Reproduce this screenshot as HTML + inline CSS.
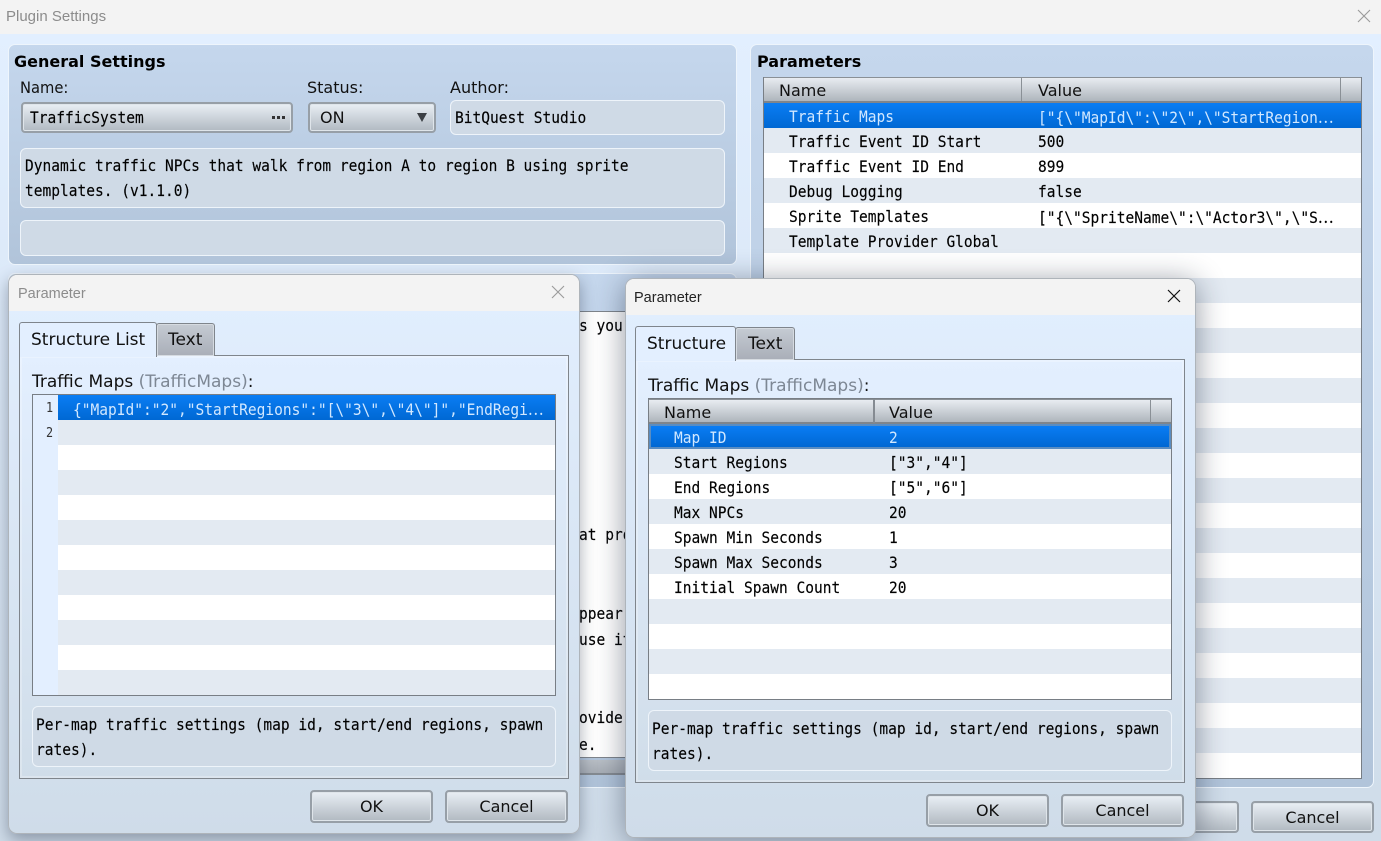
<!DOCTYPE html>
<html><head><meta charset="utf-8"><style>
html,body{margin:0;padding:0;width:1381px;height:841px;overflow:hidden;background:#d3e0ec}
*{box-sizing:border-box}
div,span{position:absolute}
.t{white-space:pre;color:#111;font-family:"DejaVu Sans",sans-serif;font-size:16px;line-height:20px}
.l{font-size:17px}
.m{white-space:pre;color:#000;font-family:"DejaVu Sans Mono",monospace;font-size:16px;line-height:25px;transform:scaleX(.908);transform-origin:0 50%;-webkit-text-stroke:.15px #000}
.e{position:static;font-family:"Noto Sans CJK JP",monospace}
.b{font-weight:bold;color:#000}
.s{color:#d2e8ff;-webkit-text-stroke:0}
.panel{border:1px solid #eef5fc;border-radius:7px;background:linear-gradient(#c5d7ed,#b1c4da)}
.box{border:1px solid #eef4fa;border-radius:6px;background:#cfdae6}
.btn{border:2px solid #979fa7;border-radius:4px;background:linear-gradient(#e9eff5,#b1b9c1);box-shadow:inset 0 0 0 1px #dfe5ea}
.btn span{left:0;right:0;text-align:center;top:5px;white-space:pre;font-family:"DejaVu Sans",sans-serif;font-size:16px;line-height:20px;color:#111}
.grid{border:1px solid #787e85;background:repeating-linear-gradient(#fff 0,#fff 25px,#e3eaf2 25px,#e3eaf2 50px)}
.alt{background:repeating-linear-gradient(#e3eaf2 0,#e3eaf2 25px,#fff 25px,#fff 50px)}
.head{background:linear-gradient(#e8ecf1,#aeb5bc);border-bottom:2px solid #7f858c;border-top:1px solid #8a9096}
.sel{background:linear-gradient(#0a7df4,#0068d3)}
.dlg{border:1px solid #aeb4ba;border-radius:9px;background:linear-gradient(#e2efff,#cfdce9);overflow:hidden}
.tb{left:0;right:0;top:0;height:36px;background:#f3f3f3}
.pane{border:1px solid #7f858c;background:linear-gradient(#e3efff,#d0dde9);box-shadow:inset 0 0 0 2px rgba(255,255,255,.25)}
.tab2{border:1px solid #7f858c;border-bottom:0;border-radius:3px 3px 0 0;background:linear-gradient(#c5cbd3,#a9aeb8);box-shadow:inset 0 0 0 1px #d6dbe1}
.tab1{border:1px solid #7f858c;border-bottom:0;border-radius:3px 3px 0 0;background:#e3efff}
.g{color:#7d8794;position:static}
</style></head><body>
<div style="left:0;top:0;width:1381px;height:34px;background:#f3f3f3"></div>
<div style="left:0;top:34px;width:1381px;height:807px;background:linear-gradient(#e2efff,#cfdce9)"></div>
<div class="t" style="left:6px;top:7px;font-family:'Liberation Sans',sans-serif;font-size:15px;color:#8c8c8c">Plugin Settings</div>
<svg style="position:absolute;left:1357px;top:9px" width="14" height="14"><path d="M1 1L13 13M13 1L1 13" stroke="#9a9a9a" stroke-width="1.1" fill="none"/></svg>

<div class="panel" style="left:8px;top:44px;width:729px;height:221px"></div>
<div class="t b" style="left:14px;top:52px">General Settings</div>
<div class="t" style="left:20px;top:78px;transform:scaleX(.92);transform-origin:0 50%">Name:</div>
<div class="t" style="left:307px;top:78px">Status:</div>
<div class="t" style="left:450px;top:78px">Author:</div>
<div class="btn" style="left:21px;top:102px;width:272px;height:31px"></div>
<div class="m" style="left:30px;top:105px">TrafficSystem</div>
<div style="left:272px;top:116px;width:3px;height:3px;background:#333;box-shadow:5px 0 #333,10px 0 #333"></div>
<div class="btn" style="left:308px;top:102px;width:128px;height:31px"></div>
<div class="t" style="left:320px;top:108px">ON</div>
<svg style="position:absolute;left:417px;top:113px" width="11" height="10"><path d="M0 0H10L5 9Z" fill="#3b3f44"/></svg>
<div class="box" style="left:450px;top:100px;width:275px;height:35px"></div>
<div class="m" style="left:455px;top:105px">BitQuest Studio</div>
<div class="box" style="left:20px;top:148px;width:705px;height:60px"></div>
<div class="m" style="left:25px;top:153px">Dynamic traffic NPCs that walk from region A to region B using sprite</div>
<div class="m" style="left:25px;top:178px">templates. (v1.1.0)</div>
<div class="box" style="left:20px;top:220px;width:705px;height:36px"></div>

<div class="panel" style="left:8px;top:273px;width:729px;height:515px"></div>
<div style="left:20px;top:311px;width:705px;height:447px;background:#fff;border-top:1px solid #7f858c;border-bottom:1px solid #7f858c"></div>
<div style="left:20px;top:760px;width:705px;height:15px;background:linear-gradient(#b9bfc6,#a7adb5);border-bottom:2px solid #858b92"></div>
<div class="m" style="left:579px;top:313px">s you</div>
<div class="m" style="left:579px;top:522px">at pro</div>
<div class="m" style="left:579px;top:601px">ppear</div>
<div class="m" style="left:579px;top:627px">use it</div>
<div class="m" style="left:579px;top:705px">ovider</div>
<div class="m" style="left:579px;top:732px">e.</div>

<div class="panel" style="left:750px;top:44px;width:624px;height:744px"></div>
<div class="t b" style="left:757px;top:52px">Parameters</div>
<div class="grid alt" style="left:763px;top:77px;width:599px;height:702px"></div>
<div class="head" style="left:764px;top:77px;width:597px;height:26px"></div>
<div style="left:1021px;top:78px;width:1px;height:23px;background:#8a9096"></div>
<div style="left:1340px;top:78px;width:1px;height:23px;background:#8a9096"></div>
<div class="t" style="left:779px;top:81px">Name</div>
<div class="t" style="left:1038px;top:81px">Value</div>
<div class="sel" style="left:764px;top:103px;width:597px;height:25px"></div>
<div class="m s" style="left:789px;top:104px">Traffic Maps</div>
<div class="m s" style="left:1038px;top:104px">["{\"MapId\":\"2\",\"StartRegion<span class="e">⋯</span></div>
<div class="m" style="left:789px;top:129px">Traffic Event ID Start</div><div class="m" style="left:1038px;top:129px">500</div>
<div class="m" style="left:789px;top:154px">Traffic Event ID End</div><div class="m" style="left:1038px;top:154px">899</div>
<div class="m" style="left:789px;top:179px">Debug Logging</div><div class="m" style="left:1038px;top:179px">false</div>
<div class="m" style="left:789px;top:204px">Sprite Templates</div><div class="m" style="left:1038px;top:204px">["{\"SpriteName\":\"Actor3\",\"S<span class="e">⋯</span></div>
<div class="m" style="left:789px;top:229px">Template Provider Global</div>

<div class="btn" style="left:1116px;top:801px;width:123px;height:32px"></div>
<div class="btn" style="left:1251px;top:801px;width:123px;height:32px"><span>Cancel</span></div>

<!-- left dialog -->
<div class="dlg" style="left:8px;top:274px;width:572px;height:560px;box-shadow:0 6px 16px rgba(30,40,60,.38)">
  <div class="tb"></div>
</div>
<div class="t" style="left:18px;top:284px;font-family:'Liberation Sans',sans-serif;font-size:14.5px;color:#8c8c8c">Parameter</div>
<svg style="position:absolute;left:551px;top:285px" width="14" height="14"><path d="M1 1L13 13M13 1L1 13" stroke="#9a9a9a" stroke-width="1.1" fill="none"/></svg>
<div class="pane" style="left:19px;top:355px;width:550px;height:424px"></div>
<div class="tab2" style="left:156px;top:323px;width:59px;height:33px"></div>
<div class="tab1" style="left:19px;top:322px;width:138px;height:35px"></div>
<div class="t l" style="left:31px;top:330px">Structure List</div>
<div class="t l" style="left:168px;top:330px">Text</div>
<div class="t l" style="left:32px;top:372px">Traffic Maps <span class="g">(TrafficMaps)</span>:</div>
<div class="grid" style="left:32px;top:394px;width:524px;height:302px"></div>
<div style="left:33px;top:395px;width:25px;height:300px;background:#e3efff"></div>
<div class="sel" style="left:58px;top:395px;width:497px;height:25px"></div>
<div class="m" style="left:46px;top:396px;font-size:13px;color:#333;-webkit-text-stroke:0">1</div>
<div class="m" style="left:46px;top:421px;font-size:13px;color:#333;-webkit-text-stroke:0">2</div>
<div class="m s" style="left:73px;top:396px">{"MapId":"2","StartRegions":"[\"3\",\"4\"]","EndRegi<span class="e">⋯</span></div>
<div class="box" style="left:32px;top:706px;width:524px;height:61px"></div>
<div class="m" style="left:36px;top:712px">Per-map traffic settings (map id, start/end regions, spawn</div>
<div class="m" style="left:36px;top:737px">rates).</div>
<div class="btn" style="left:310px;top:790px;width:123px;height:33px"><span>OK</span></div>
<div class="btn" style="left:445px;top:790px;width:123px;height:33px"><span>Cancel</span></div>

<!-- right dialog -->
<div class="dlg" style="left:625px;top:278px;width:571px;height:560px;box-shadow:0 4px 30px rgba(30,40,60,.48)">
  <div class="tb"></div>
</div>
<div class="t" style="left:634px;top:288px;font-family:'Liberation Sans',sans-serif;font-size:14.5px;color:#222">Parameter</div>
<svg style="position:absolute;left:1167px;top:289px" width="14" height="14"><path d="M1 1L13 13M13 1L1 13" stroke="#111" stroke-width="1.2" fill="none"/></svg>
<div class="pane" style="left:635px;top:359px;width:550px;height:424px"></div>
<div class="tab2" style="left:735px;top:327px;width:60px;height:33px"></div>
<div class="tab1" style="left:635px;top:326px;width:101px;height:35px"></div>
<div class="t l" style="left:647px;top:334px">Structure</div>
<div class="t l" style="left:748px;top:334px">Text</div>
<div class="t l" style="left:648px;top:376px">Traffic Maps <span class="g">(TrafficMaps)</span>:</div>
<div class="grid alt" style="left:648px;top:398px;width:524px;height:302px"></div>
<div class="head" style="left:649px;top:399px;width:522px;height:25px"></div>
<div style="left:873px;top:399px;width:2px;height:24px;background:#858b92"></div>
<div style="left:1150px;top:399px;width:1px;height:24px;background:#8a9096"></div>
<div class="t" style="left:664px;top:403px">Name</div>
<div class="t" style="left:889px;top:403px">Value</div>
<div class="sel" style="left:649px;top:424px;width:522px;height:25px;border:2px solid #5a8dc2"></div>
<div class="m s" style="left:674px;top:425px">Map ID</div><div class="m s" style="left:889px;top:425px">2</div>
<div class="m" style="left:674px;top:450px">Start Regions</div><div class="m" style="left:889px;top:450px">["3","4"]</div>
<div class="m" style="left:674px;top:475px">End Regions</div><div class="m" style="left:889px;top:475px">["5","6"]</div>
<div class="m" style="left:674px;top:500px">Max NPCs</div><div class="m" style="left:889px;top:500px">20</div>
<div class="m" style="left:674px;top:525px">Spawn Min Seconds</div><div class="m" style="left:889px;top:525px">1</div>
<div class="m" style="left:674px;top:550px">Spawn Max Seconds</div><div class="m" style="left:889px;top:550px">3</div>
<div class="m" style="left:674px;top:575px">Initial Spawn Count</div><div class="m" style="left:889px;top:575px">20</div>
<div class="box" style="left:648px;top:710px;width:524px;height:61px"></div>
<div class="m" style="left:652px;top:716px">Per-map traffic settings (map id, start/end regions, spawn</div>
<div class="m" style="left:652px;top:741px">rates).</div>
<div class="btn" style="left:926px;top:794px;width:123px;height:33px"><span>OK</span></div>
<div class="btn" style="left:1061px;top:794px;width:123px;height:33px"><span>Cancel</span></div>
</body></html>
